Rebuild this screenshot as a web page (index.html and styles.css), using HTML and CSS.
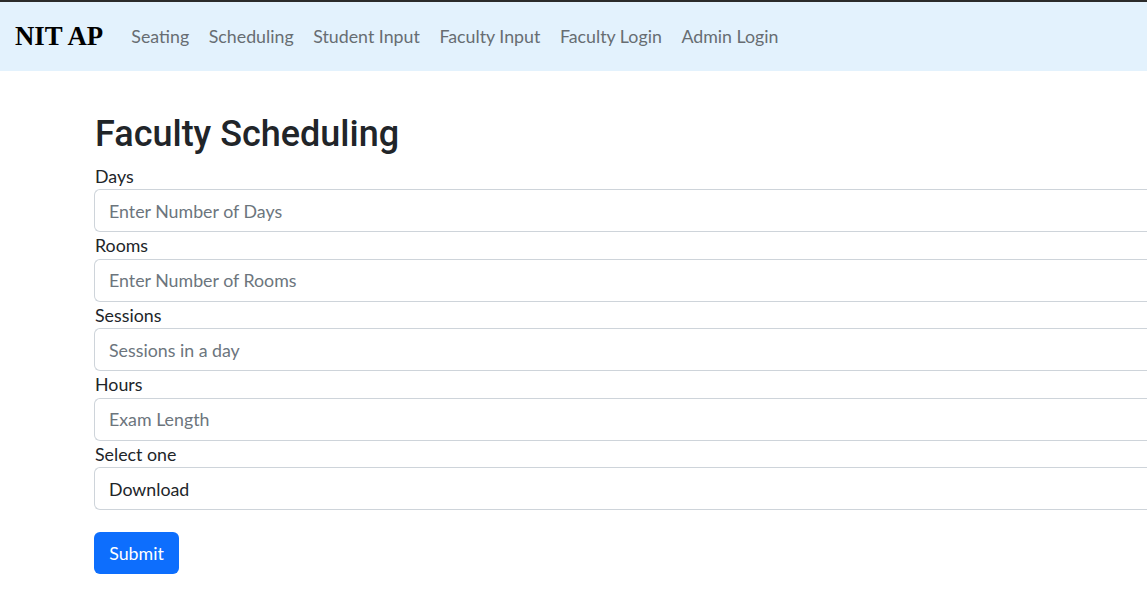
FILE: index.html
```html
<!DOCTYPE html>
<html lang="en">
<head>
<meta charset="utf-8">
<title>Faculty Scheduling</title>
<link rel="stylesheet" href="styles.css">
</head>
<body>
<nav class="navbar">
  <a class="brand" href="#">NIT AP</a>
  <ul class="nav-links">
    <li><a href="#">Seating</a></li>
    <li><a href="#">Scheduling</a></li>
    <li><a href="#">Student Input</a></li>
    <li><a href="#">Faculty Input</a></li>
    <li><a href="#">Faculty Login</a></li>
    <li><a href="#">Admin Login</a></li>
  </ul>
</nav>
<main class="page">
  <h1 class="title">Faculty Scheduling</h1>
  <form class="form">
    <div class="field">
      <label class="label" for="days">Days</label>
      <input class="control" id="days" type="text" placeholder="Enter Number of Days">
    </div>
    <div class="field">
      <label class="label" for="rooms">Rooms</label>
      <input class="control" id="rooms" type="text" placeholder="Enter Number of Rooms">
    </div>
    <div class="field">
      <label class="label" for="sessions">Sessions</label>
      <input class="control" id="sessions" type="text" placeholder="Sessions in a day">
    </div>
    <div class="field">
      <label class="label" for="hours">Hours</label>
      <input class="control" id="hours" type="text" placeholder="Exam Length">
    </div>
    <div class="field">
      <label class="label" for="choice">Select one</label>
      <select class="control select" id="choice">
        <option>Download</option>
      </select>
    </div>
    <button class="btn" type="button">Submit</button>
  </form>
</main>
</body>
</html>
```
FILE: styles.css
```css
html, body {
  margin: 0;
  padding: 0;
  overflow: hidden;
  background: #fff;
}
body {
  font-family: "Lato", "Liberation Sans", sans-serif;
  font-size: 17.8px;
  color: #212529;
}
.navbar {
  display: flex;
  align-items: center;
  height: 69px;
  border-top: 2px solid #2b2b2b;
  background: #e3f2fd;
  padding-left: 15px;
}
.brand {
  font-family: "Liberation Serif", serif;
  font-weight: bold;
  font-size: 26.8px;
  color: #000;
  text-decoration: none;
  margin-right: 18.4px;
}
.nav-links {
  display: flex;
  list-style: none;
  margin: 0;
  padding: 0;
}
.nav-links a {
  display: block;
  padding: 0 9.8px;
  color: #676d72;
  text-decoration: none;
  font-size: 17.8px;
  line-height: 26px;
  position: relative;
  top: -1px;
}
.page {
  padding: 40px 0 0 94px;
}
.title {
  font-family: "Roboto", "Lato", sans-serif;
  font-size: 36px;
  font-weight: 500;
  line-height: 46px;
  margin: 0 0 5.7px 1px;
  color: #212529;
}
.field {
  display: flex;
  flex-direction: column;
}
.label {
  display: block;
  height: 26.5px;
  line-height: 26.5px;
  padding-left: 1px;
}
.control {
  box-sizing: border-box;
  height: 43px;
  width: 100%;
  border: 1px solid #ced4da;
  border-right: 0;
  border-radius: 6px 0 0 6px;
  padding: 0 14px;
  font-family: inherit;
  font-size: 17.8px;
  color: #212529;
  background: #fff;
  margin: 0;
}
.control::placeholder {
  color: #6c757d;
}
.select {
  appearance: none;
  -webkit-appearance: none;
}
.btn {
  margin-top: 22px;
  height: 42px;
  width: 85px;
  border: none;
  border-radius: 6px;
  background: #0d6efd;
  color: #fff;
  font-family: inherit;
  font-size: 17.8px;
  padding: 0;
  cursor: pointer;
}
```
